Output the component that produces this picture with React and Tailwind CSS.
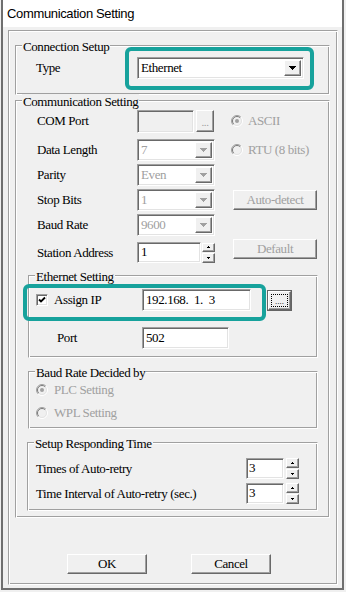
import React from "react";

const etched =
  "border border-t-[#a0a0a0] border-l-[#a0a0a0] border-r-white border-b-white shadow-[inset_1px_1px_0_#fff,inset_-1px_-1px_0_#a0a0a0]";
const sunken =
  "border border-t-[#a0a0a0] border-l-[#a0a0a0] border-r-white border-b-white shadow-[inset_1px_1px_0_#696969,inset_-1px_-1px_0_#e3e3e3]";
const raised =
  "border border-t-white border-l-white border-r-[#696969] border-b-[#696969] shadow-[inset_-1px_-1px_0_#a0a0a0] bg-[#f0f0f0]";

function Tri({ down = true, color = "#000", w = 7 }) {
  const h = Math.ceil(w / 2);
  const rows = [];
  for (let i = 0; i < h; i++) {
    rows.push(
      <rect
        key={i}
        x={i}
        y={down ? i : h - 1 - i}
        width={w - 2 * i}
        height={1}
        fill={color}
      />
    );
  }
  return (
    <svg width={w} height={h} viewBox={`0 0 ${w} ${h}`} shapeRendering="crispEdges">
      {rows}
    </svg>
  );
}

function Radio({ checked }) {
  return (
    <svg width="12" height="12" viewBox="0 0 12 12" className="shrink-0">
      <circle cx="6" cy="6" r="5.5" fill="#f0f0f0" />
      <path d="M2.1 9.9 A5.5 5.5 0 0 1 9.9 2.1" fill="none" stroke="#a0a0a0" strokeWidth="1" />
      <path d="M9.9 2.1 A5.5 5.5 0 0 1 2.1 9.9" fill="none" stroke="#ffffff" strokeWidth="1" />
      <path d="M2.8 9.2 A4.5 4.5 0 0 1 9.2 2.8" fill="none" stroke="#7a7a7a" strokeWidth="1" />
      <path d="M9.2 2.8 A4.5 4.5 0 0 1 2.8 9.2" fill="none" stroke="#e3e3e3" strokeWidth="1" />
      {checked && <circle cx="6" cy="6" r="2" fill="#a0a0a0" />}
    </svg>
  );
}

function Check() {
  return (
    <div className={`${sunken} w-[12px] h-[12px] bg-white flex items-center justify-center shrink-0`}>
      <svg width="8" height="8" viewBox="0 0 8 8">
        <path d="M1 3.5 L3 5.5 L7 1.5" fill="none" stroke="#000" strokeWidth="1.8" />
      </svg>
    </div>
  );
}

function Combo({ value, className, disabled }) {
  return (
    <div className={`${sunken} bg-white h-[22px] flex p-[2px] ${className}`}>
      <span
        className={`flex-1 pl-[1px] leading-[16px] ${disabled ? "text-[#a0a0a0]" : "text-black"}`}
      >
        {value}
      </span>
      <div className={`${raised} w-[17px] flex items-center justify-center`}>
        <Tri color={disabled ? "#a0a0a0" : "#000"} w={7} />
      </div>
    </div>
  );
}

function Spinner({ className }) {
  return (
    <div className={`flex flex-col gap-[1px] w-[13px] ${className}`}>
      <div className={`${raised} flex-1 flex items-center justify-center`}>
        <Tri down={false} w={3} />
      </div>
      <div className={`${raised} flex-1 flex items-center justify-center`}>
        <Tri w={3} />
      </div>
    </div>
  );
}

function Group({ label, className, children }) {
  return (
    <div className={`relative ${etched} ${className}`}>
      <span className="absolute left-[6px] top-[-7px] px-[1px] bg-[#f0f0f0] leading-[15px] whitespace-nowrap">
        {label}
      </span>
      {children}
    </div>
  );
}

export default function App() {
  return (
    <div
      className="relative w-[346px] h-[592px] overflow-hidden bg-[#f0f0f0] text-[13px] tracking-[-0.4px] text-black"
      style={{ fontFamily: '"Liberation Serif", "Times New Roman", serif' }}
    >
      <div className="ml-[1px] w-[343px] h-[590px] border-l-2 border-r-2 border-b-2 border-[#6f6f6f] flex flex-col bg-[#f0f0f0]">
        {/* Title bar */}
        <div
          className="h-[27px] bg-white flex items-center pl-[4px] text-[13px] tracking-[-0.35px]"
          style={{ fontFamily: '"Liberation Sans", Arial, sans-serif' }}
        >
          Communication Setting
        </div>

        {/* Body */}
        <div className="flex-1 pt-[3px] pb-[3px] pl-[5px] pr-[4px]">
          <div className={`${etched} h-[555px] flex flex-col`}>
            {/* Connection Setup */}
            <Group label="Connection Setup" className="ml-[6px] w-[315px] h-[50px] mt-[14px]">
              <div className="flex items-center h-[22px] mt-[11px] pl-[20px]">
                <span className="w-[101px]">Type</span>
                <Combo value="Ethernet" className="w-[167px]" />
              </div>
            </Group>

            {/* Communication Setting */}
            <Group label="Communication Setting" className="ml-[6px] w-[315px] h-[418px] mt-[5px]">
              <div className="flex flex-col pl-[21px]">
                <div className="flex items-center h-[24px] mt-[8px]">
                  <span className="w-[100px]">COM Port</span>
                  <div className={`${sunken} w-[57px] h-[23px] bg-[#f0f0f0]`} />
                  <div
                    className={`${raised} ml-[2px] w-[18px] h-[22px] flex items-end justify-center pb-[3px] text-[11px] leading-[11px] text-[#a0a0a0]`}
                  >
                    ...
                  </div>
                  <div className="ml-[17px] flex items-center gap-[5px] text-[#a0a0a0]">
                    <Radio checked />
                    <span>ASCII</span>
                  </div>
                </div>

                <div className="flex items-center h-[22px] mt-[6px]">
                  <span className="w-[100px]">Data Length</span>
                  <Combo value="7" disabled className="w-[78px]" />
                  <div className="ml-[16px] flex items-center gap-[5px] text-[#a0a0a0]">
                    <Radio />
                    <span>RTU (8 bits)</span>
                  </div>
                </div>

                <div className="flex items-center h-[22px] mt-[3px]">
                  <span className="w-[100px]">Parity</span>
                  <Combo value="Even" disabled className="w-[78px]" />
                </div>

                <div className="flex items-center h-[22px] mt-[3px]">
                  <span className="w-[100px]">Stop Bits</span>
                  <Combo value="1" disabled className="w-[78px]" />
                  <div
                    className={`${raised} ml-[18px] w-[84px] h-[20px] flex items-center justify-center text-[#a0a0a0]`}
                  >
                    Auto-detect
                  </div>
                </div>

                <div className="flex items-center h-[22px] mt-[3px]">
                  <span className="w-[100px]">Baud Rate</span>
                  <Combo value="9600" disabled className="w-[78px]" />
                </div>

                <div className="flex items-center h-[21px] mt-[6px]">
                  <span className="w-[100px]">Station Address</span>
                  <div className={`${sunken} w-[64px] h-[21px] bg-white pl-[3px] leading-[18px]`}>1</div>
                  <Spinner className="ml-[1px] h-[20px]" />
                  <div
                    className={`${raised} ml-[18px] w-[84px] h-[20px] mb-[8px] flex items-center justify-center text-[#a0a0a0]`}
                  >
                    Default
                  </div>
                </div>
              </div>

              {/* Ethernet Setting */}
              <Group label="Ethernet Setting" className="ml-[12px] w-[290px] h-[83px] mt-[12px]">
                <div className="flex items-center h-[22px] mt-[13px] pl-[7px]">
                  <Check />
                  <span className="ml-[6px] w-[88px]">Assign IP</span>
                  <div className={`${sunken} w-[109px] h-[22px] bg-white pl-[3px] leading-[19px] whitespace-pre`}>
                    {"192.168.  1.  3"}
                  </div>
                  <div className="ml-[16px] w-[25px] h-[21px] border border-[#646464] flex">
                    <div className={`${raised} flex-1 p-[2px]`}>
                      <div className="w-full h-full border border-dotted border-black flex items-end justify-center text-[9px] leading-[9px] tracking-[0px]">
                        ....
                      </div>
                    </div>
                  </div>
                </div>
                <div className="flex items-center h-[22px] mt-[16px] pl-[28px]">
                  <span className="w-[85px]">Port</span>
                  <div className={`${sunken} w-[87px] h-[22px] bg-white pl-[3px] leading-[19px]`}>502</div>
                </div>
              </Group>

              {/* Baud Rate Decided by */}
              <Group label="Baud Rate Decided by" className="ml-[12px] w-[290px] h-[58px] mt-[13px]">
                <div className="flex items-center h-[20px] mt-[8px] pl-[7px] gap-[6px] text-[#a0a0a0]">
                  <Radio checked />
                  <span>PLC Setting</span>
                </div>
                <div className="flex items-center h-[20px] mt-[3px] pl-[7px] gap-[6px] text-[#a0a0a0]">
                  <Radio />
                  <span>WPL Setting</span>
                </div>
              </Group>

              {/* Setup Responding Time */}
              <Group label="Setup Responding Time" className="ml-[11px] w-[291px] h-[69px] mt-[13px]">
                <div className="flex items-center h-[21px] mt-[15px] pl-[8px]">
                  <span className="w-[210px]">Times of Auto-retry</span>
                  <div className={`${sunken} w-[38px] h-[21px] bg-white pl-[2px] leading-[18px]`}>3</div>
                  <Spinner className="ml-[2px] h-[21px]" />
                </div>
                <div className="flex items-center h-[21px] mt-[4px] pl-[8px]">
                  <span className="w-[210px]">Time Interval of Auto-retry (sec.)</span>
                  <div className={`${sunken} w-[38px] h-[21px] bg-white pl-[2px] leading-[18px]`}>3</div>
                  <Spinner className="ml-[2px] h-[21px]" />
                </div>
              </Group>
            </Group>

            {/* Buttons */}
            <div className="flex mt-[36px] pl-[58px]">
              <div className={`${raised} w-[80px] h-[20px] flex items-center justify-center`}>OK</div>
              <div className={`${raised} ml-[44px] w-[80px] h-[20px] flex items-center justify-center`}>
                Cancel
              </div>
            </div>
          </div>
        </div>
      </div>

      {/* Teal annotation highlights */}
      <div className="absolute left-[125px] top-[47px] w-[189px] h-[43px] border-4 border-[#17a29c] rounded-[6px]" />
      <div className="absolute left-[23px] top-[284px] w-[243px] h-[37px] border-4 border-[#17a29c] rounded-[6px]" />
    </div>
  );
}
